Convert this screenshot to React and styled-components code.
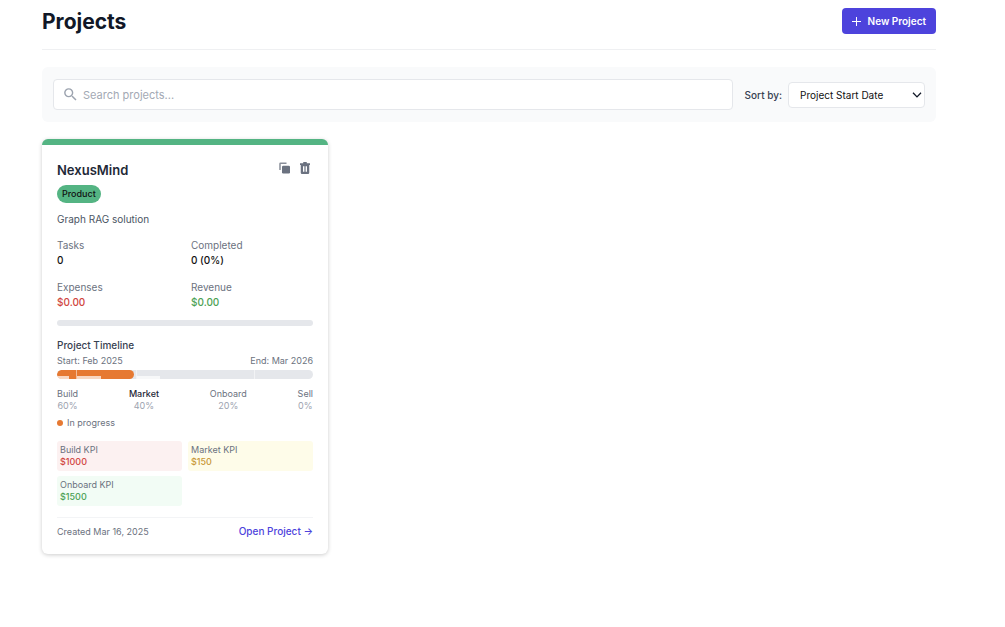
import styled, { createGlobalStyle } from "styled-components";
import { MdSearch } from "react-icons/md";

const GlobalStyle = createGlobalStyle`
  * {
    box-sizing: border-box;
  }
  body {
    margin: 0;
    background-color: #ffffff;
    color: #111827;
    font-family: Inter, "Liberation Sans", sans-serif;
  }
  h1, h2, h3, p, dl, dd {
    margin: 0;
  }
  button, input, select {
    font-family: inherit;
  }
`;

const stats = [
  { label: "Tasks", value: "0", color: "#111111" },
  { label: "Completed", value: "0 (0%)", color: "#111111" },
  { label: "Expenses", value: "$0.00", color: "#d0443e" },
  { label: "Revenue", value: "$0.00", color: "#4ca154" },
];

const stages = [
  { name: "Build", progress: 60, months: 1 },
  { name: "Market", progress: 40, months: 3, active: true },
  { name: "Onboard", progress: 20, months: 6 },
  { name: "Sell", progress: 0, months: 3 },
];

const kpis = [
  { label: "Build KPI", value: "$1000", color: "#d0443e", background: "#fcf1f1" },
  { label: "Market KPI", value: "$150", color: "#c8983a", background: "#fefce9" },
  { label: "Onboard KPI", value: "$1500", color: "#4ca154", background: "#f2fcf5" },
];

const CopyIcon = () => (
  <svg width="12" height="12" viewBox="0 0 24 24" fill="currentColor" aria-hidden="true">
    <path d="M5 1h12v3H5.500v12H2.500V3.500A2.500 2.500 0 0 1 5 1z" opacity="0.8" />
    <rect x="8" y="7.500" width="16" height="15.500" rx="2.500" />
  </svg>
);

const TrashIcon = () => (
  <svg width="12" height="12" viewBox="0 0 24 24" fill="currentColor" aria-hidden="true">
    <path
      fillRule="evenodd"
      d="M8.500 2.500V0h7v2.500H22V6h-1.500v15.500A2.500 2.500 0 0 1 18 24H6a2.500 2.500 0 0 1-2.500-2.500V6H2V2.500zM8 8.500v11h2.800v-11zM13.200 8.500v11H16v-11z"
    />
  </svg>
);

const ProjectCard = () => {
  return (
    <Card>
      <CardHeader>
        <h2>NexusMind</h2>
        <div className="actions">
          <IconButton type="button" aria-label="Duplicate project">
            <CopyIcon />
          </IconButton>
          <IconButton type="button" aria-label="Delete project">
            <TrashIcon />
          </IconButton>
        </div>
      </CardHeader>
      <Badge>Product</Badge>
      <Description>Graph RAG solution</Description>
      <Stats>
        {stats.map((stat) => (
          <Stat key={stat.label} $color={stat.color}>
            <dt>{stat.label}</dt>
            <dd>{stat.value}</dd>
          </Stat>
        ))}
      </Stats>
      <TaskProgress />
      <h3>Project Timeline</h3>
      <Dates>
        <span>Start: Feb 2025</span>
        <span>End: Mar 2026</span>
      </Dates>
      <Timeline>
        <Elapsed style={{ width: "30%" }} />
        <Segments>
          {stages.map((stage) => (
            <Segment key={stage.name} $months={stage.months}>
              <div style={{ width: `${stage.progress}%` }} />
            </Segment>
          ))}
        </Segments>
      </Timeline>
      <Stages>
        {stages.map((stage) => (
          <Stage key={stage.name} $active={stage.active}>
            <span>{stage.name}</span>
            <small>{stage.progress}%</small>
          </Stage>
        ))}
      </Stages>
      <Status>In progress</Status>
      <Kpis>
        {kpis.map((kpi) => (
          <Kpi key={kpi.label} $color={kpi.color} $background={kpi.background}>
            <p>{kpi.label}</p>
            <strong>{kpi.value}</strong>
          </Kpi>
        ))}
      </Kpis>
      <CardFooter>
        <span>Created Mar 16, 2025</span>
        <a href="#project">Open Project →</a>
      </CardFooter>
    </Card>
  );
};

const App = () => {
  return (
    <>
      <GlobalStyle />
      <Page>
        <Header>
          <h1>Projects</h1>
          <NewButton type="button">
            <svg width="9" height="9" viewBox="0 0 9 9" stroke="currentColor" aria-hidden="true">
              <path d="M4.500 0v9M0 4.500h9" />
            </svg>
            New Project
          </NewButton>
        </Header>
        <Toolbar>
          <SearchBox>
            <MdSearch size={17} aria-hidden="true" />
            <input type="text" aria-label="Search projects" placeholder="Search projects..." />
          </SearchBox>
          <label htmlFor="sort">Sort by:</label>
          <SelectBox>
            <select id="sort" defaultValue="start">
              <option value="start">Project Start Date</option>
            </select>
            <svg width="10" height="6" viewBox="0 0 10 6" fill="none" stroke="currentColor" aria-hidden="true">
              <path d="M1 0.800 5 4.900 9 0.800" strokeWidth="1.300" />
            </svg>
          </SelectBox>
        </Toolbar>
        <Grid>
          <ProjectCard />
        </Grid>
      </Page>
    </>
  );
};

const Page = styled.main`
  padding: 8px 69px 24px 42px;
`;

const Header = styled.header`
  display: flex;
  align-items: flex-start;
  justify-content: space-between;
  padding-bottom: 14px;
  border-bottom: 1px solid #eff0f2;
  h1 {
    font-size: 21px;
    line-height: 27px;
    font-weight: 700;
  }
`;

const NewButton = styled.button`
  display: flex;
  align-items: center;
  gap: 7px;
  height: 26px;
  padding: 0 10px;
  border: none;
  border-radius: 4px;
  background-color: #4d43dc;
  color: #ffffff;
  font-size: 10px;
  font-weight: 600;
  cursor: pointer;
`;

const Toolbar = styled.section`
  display: flex;
  align-items: center;
  margin-top: 17px;
  padding: 12px 11px;
  border-radius: 6px;
  background-color: #f9fafb;
  label {
    margin: 0 6px 0 12px;
    color: #374151;
    font-size: 10px;
    font-weight: 500;
  }
`;

const SearchBox = styled.div`
  display: flex;
  flex: 1;
  align-items: center;
  gap: 4px;
  height: 31px;
  padding: 0 8px;
  border: 1px solid #e5e7eb;
  border-radius: 4px;
  background-color: #ffffff;
  color: #9ca3af;
  input {
    flex: 1;
    min-width: 0;
    padding: 0;
    border: none;
    outline: none;
    background: none;
    font-size: 11px;
  }
  input::placeholder {
    color: #a3a9b4;
  }
`;

const SelectBox = styled.div`
  position: relative;
  select {
    display: block;
    width: 137px;
    height: 26px;
    padding: 0 24px 0 11px;
    border: 1px solid #e5e7eb;
    border-radius: 4px;
    background-color: #ffffff;
    color: #111111;
    font-size: 10px;
    appearance: none;
  }
  svg {
    position: absolute;
    top: 10px;
    right: 3px;
    pointer-events: none;
  }
`;

const Grid = styled.section`
  display: grid;
  grid-template-columns: repeat(3, 1fr);
  gap: 18px;
  margin-top: 17px;
`;

const Card = styled.article`
  padding: 15px;
  border-top: 6px solid #54b483;
  border-radius: 6px;
  background-color: #ffffff;
  box-shadow: 0 1px 4px rgba(0, 0, 0, 0.2);
  h3 {
    margin-top: 12px;
    color: #374151;
    font-size: 10px;
    line-height: 15px;
    font-weight: 500;
  }
`;

const CardHeader = styled.div`
  display: flex;
  align-items: flex-start;
  justify-content: space-between;
  h2 {
    color: #1f2937;
    font-size: 13px;
    line-height: 20px;
    font-weight: 600;
  }
  .actions {
    display: flex;
    gap: 9px;
    padding: 2px 2px 0 0;
  }
`;

const IconButton = styled.button`
  display: flex;
  padding: 0;
  border: none;
  background: none;
  color: #6b7280;
  cursor: pointer;
`;

const Badge = styled.span`
  display: block;
  width: fit-content;
  margin-top: 5px;
  padding: 0 5px;
  border-radius: 9px;
  background-color: #54b483;
  color: #111111;
  font-size: 9px;
  line-height: 18px;
  font-weight: 500;
`;

const Description = styled.p`
  margin-top: 9px;
  color: #4b5563;
  font-size: 10px;
  line-height: 15px;
`;

const Stats = styled.dl`
  display: grid;
  grid-template-columns: 1fr 1fr;
  gap: 12px;
  margin-top: 11px;
`;

const Stat = styled.div`
  font-size: 10px;
  line-height: 15px;
  dt {
    color: #6b7280;
  }
  dd {
    color: ${({ $color }) => $color};
    font-weight: 500;
  }
`;

const TaskProgress = styled.div`
  height: 6px;
  margin-top: 10px;
  border-radius: 3px;
  background-color: #e5e7eb;
`;

const Dates = styled.div`
  display: flex;
  justify-content: space-between;
  margin-top: 2px;
  color: #6b7280;
  font-size: 9px;
  line-height: 12px;
`;

const Timeline = styled.div`
  position: relative;
  height: 9px;
  margin-top: 3px;
  overflow: hidden;
  border-radius: 5px;
  background-color: #e5e7eb;
`;

const Elapsed = styled.div`
  height: 100%;
  border-radius: 5px;
  background-color: #e67932;
`;

const Segments = styled.div`
  position: absolute;
  inset: 0;
  display: flex;
`;

const Segment = styled.div`
  display: flex;
  flex: ${({ $months }) => $months} 1 0;
  align-items: flex-end;
  border-right: 1px solid rgba(255, 255, 255, 0.5);
  &:last-child {
    border-right: none;
  }
  div {
    height: 3px;
    background-color: rgba(255, 255, 255, 0.7);
  }
`;

const Stages = styled.div`
  display: flex;
  justify-content: space-between;
  margin-top: 9px;
`;

const Stage = styled.div`
  display: flex;
  flex-direction: column;
  align-items: center;
  color: ${({ $active }) => ($active ? "#1f2937" : "#6b7280")};
  font-size: 9px;
  line-height: 12px;
  font-weight: ${({ $active }) => ($active ? 500 : 400)};
  small {
    color: #9ca3af;
    font-size: 9px;
    font-weight: 400;
  }
`;

const Status = styled.p`
  display: flex;
  align-items: center;
  gap: 4px;
  margin-top: 5px;
  color: #6b7280;
  font-size: 9px;
  line-height: 12px;
  &::before {
    content: "";
    width: 6px;
    height: 6px;
    border-radius: 50%;
    background-color: #e67932;
  }
`;

const Kpis = styled.div`
  display: grid;
  grid-template-columns: 1fr 1fr;
  gap: 5px 6px;
  margin-top: 12px;
`;

const Kpi = styled.div`
  padding: 3px;
  border-radius: 3px;
  background-color: ${({ $background }) => $background};
  font-size: 9px;
  line-height: 12px;
  p {
    color: #6b7280;
  }
  strong {
    display: block;
    color: ${({ $color }) => $color};
    font-weight: 500;
  }
`;

const CardFooter = styled.footer`
  display: flex;
  align-items: center;
  justify-content: space-between;
  margin-top: 11px;
  padding-top: 6px;
  border-top: 1px solid #f3f4f6;
  color: #6b7280;
  font-size: 9px;
  line-height: 15px;
  a {
    color: #4d43dc;
    font-size: 10px;
    font-weight: 500;
    text-decoration: none;
  }
`;

export default App;
